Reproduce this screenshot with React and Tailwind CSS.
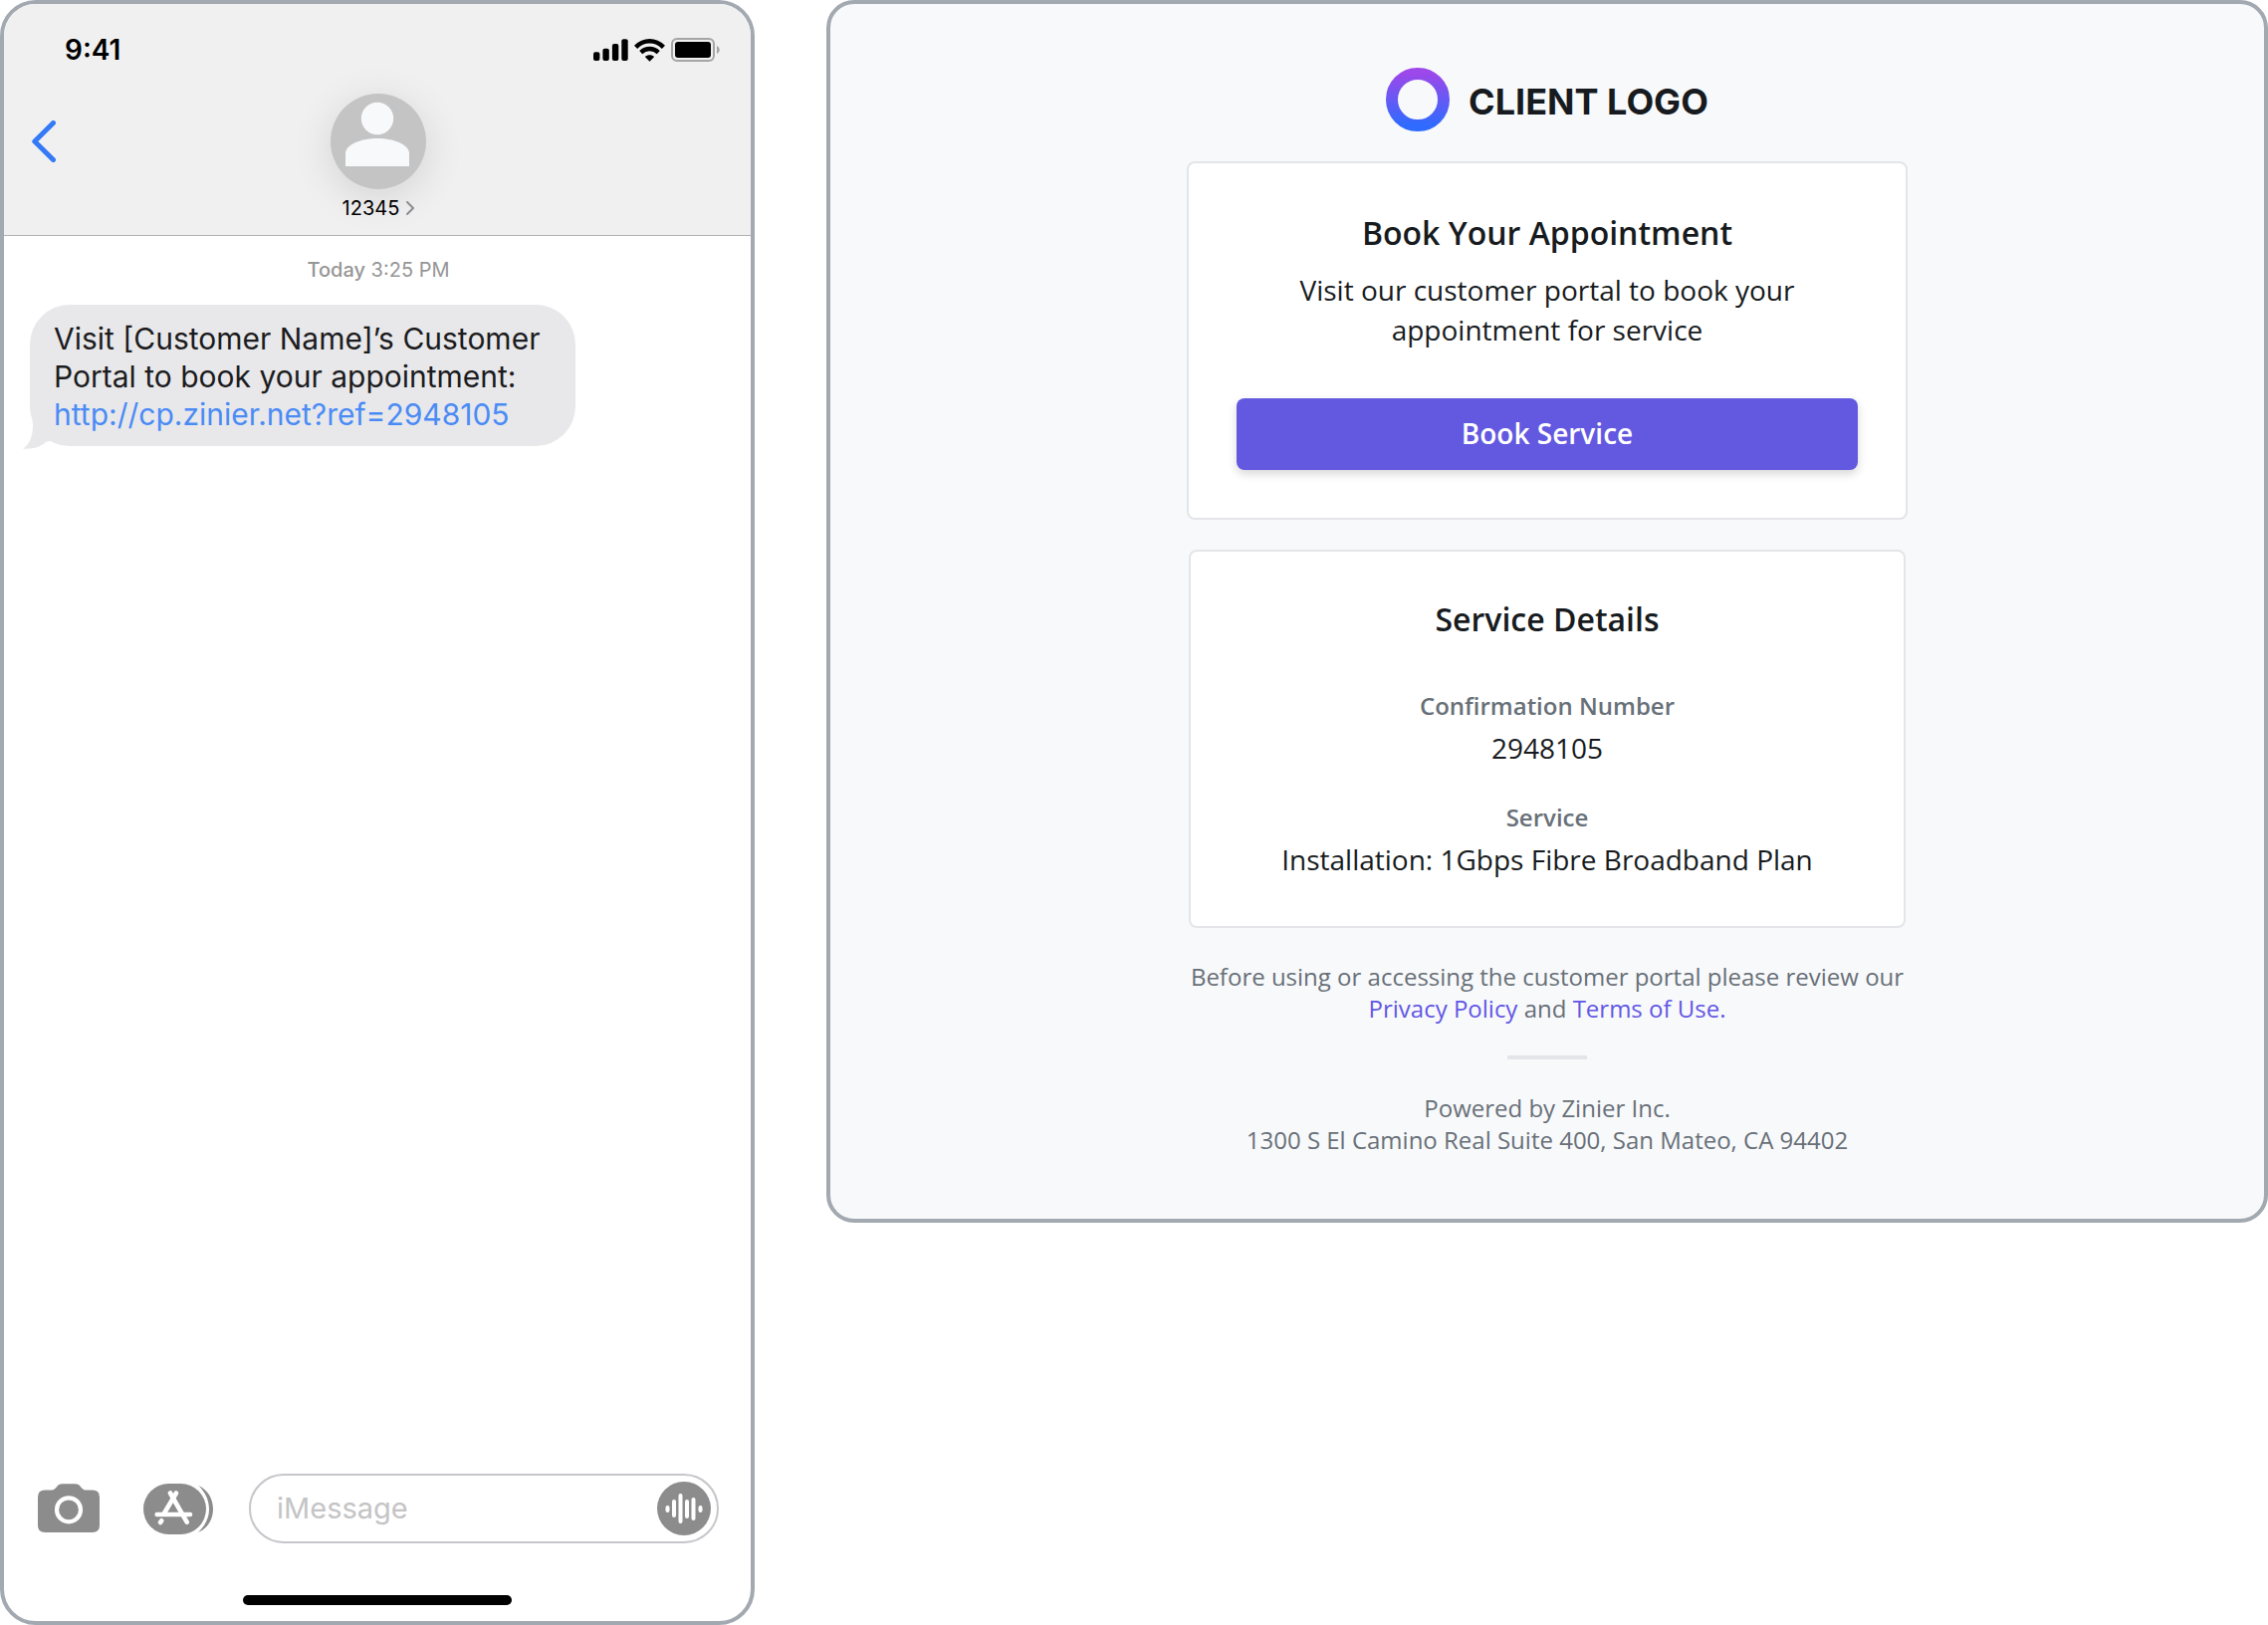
import React, { useState } from 'react';

const serviceDetails = [
  { label: 'Confirmation Number', value: '2948105' },
  { label: 'Service', value: 'Installation: 1Gbps Fibre Broadband Plan' },
];

// Status bar icons

const SignalIcon = () => (
  <svg className="w-[35px] h-[22px]" viewBox="0 0 35 22" aria-hidden="true">
    <rect x="0" y="13.2" width="6.4" height="8.8" rx="2" />
    <rect x="9.4" y="9.8" width="6.4" height="12.2" rx="2" />
    <rect x="18.9" y="5" width="6.4" height="17" rx="2" />
    <rect x="28.3" y="0.2" width="6.4" height="21.8" rx="2" />
  </svg>
);

const WifiIcon = () => (
  <svg className="w-[31px] h-[23px]" viewBox="0 0 31 23" fill="none" stroke="#000" strokeWidth="4.4" aria-hidden="true">
    <path d="M1.6 8.4C9.6 0.2 21.4 0.2 29.4 8.4" />
    <path d="M6.7 13.6C11.9 8.8 19.1 8.8 24.3 13.6" />
    <path d="M10.8 18C13.4 15.6 17.6 15.6 20.2 18L15.5 22.8Z" fill="#000" stroke="none" />
  </svg>
);

const BatteryIcon = () => (
  <svg className="w-[49px] h-[24px]" viewBox="0 0 49 24" aria-hidden="true">
    <rect x="1" y="1" width="42" height="22" rx="5" fill="none" stroke="#a5a5a5" strokeWidth="2" />
    <rect x="4" y="4" width="36" height="16" rx="3" />
    <path d="M46 8C49.6 9.6 49.6 14.4 46 16Z" fill="#a5a5a5" />
  </svg>
);

const BackIcon = () => (
  <svg className="w-6 h-[42px]" viewBox="0 0 24 42" fill="none" stroke="#3479f6" strokeWidth="5" strokeLinecap="round" strokeLinejoin="round" aria-hidden="true">
    <path d="M21.5 2.5L2.8 21L21.5 39.5" />
  </svg>
);

const PersonIcon = () => (
  <svg className="size-24" viewBox="0 0 96 96" fill="#f8f9fb" aria-hidden="true">
    <circle cx="47" cy="25" r="16.2" />
    <path d="M15 73V60C15 52 29 45 47 45S79 52 79 60V73Z" />
  </svg>
);

// Compose bar icons

const CameraIcon = () => (
  <svg className="w-[62px] h-[50px]" viewBox="0 0 62 50" aria-hidden="true">
    <path
      d="M7 6.5H14C16 6.5 17.5 5 19 3.2C20.5 1.2 22 0.3 24.5 0.3H37.5C40 0.3 41.5 1.2 43 3.2C44.5 5 46 6.5 48 6.5H55Q62 6.5 62 13.5V42Q62 49 55 49H7Q0 49 0 42V13.5Q0 6.5 7 6.5Z"
      fill="#8c8c8c"
    />
    <circle cx="31" cy="26.3" r="12" fill="none" stroke="#fff" strokeWidth="4.2" />
  </svg>
);

const AppsIcon = () => (
  <svg className="w-[70px] h-[51px]" viewBox="0 0 70 51" aria-hidden="true">
    <rect width="63" height="51" rx="25.5" fill="#8c8c8c" />
    <path d="M55.5 2C64.5 6 70 15 70 25.5S64.5 45 55 49C62 42.5 66 34.5 66 25.5S62 8.5 55.5 2Z" fill="#8c8c8c" />
    <g fill="none" stroke="#fff" strokeWidth="4.6" strokeLinecap="round">
      <path d="M33 9.5L20.5 30.5" />
      <path d="M27 9.5L43.7 38.7" />
      <path d="M13.7 31H47" />
      <path d="M18.3 37.3L17 39" />
    </g>
  </svg>
);

const AudioIcon = () => (
  <svg className="size-[54px]" viewBox="0 0 54 54" fill="none" stroke="#fff" strokeWidth="4" strokeLinecap="round" aria-hidden="true">
    <circle cx="27" cy="27" r="27" fill="#8c8c8c" stroke="none" />
    <path d="M10.5 26V29M17 20V34M23.5 14V40M30 20V35M36.5 18V37M43.5 26V29" />
  </svg>
);

const LogoMark = () => (
  <svg className="size-16" viewBox="0 0 64 64" aria-hidden="true">
    <defs>
      <linearGradient id="logoGradient" x1="0" y1="0" x2="0" y2="1">
        <stop offset="0" stopColor="#9c48ea" />
        <stop offset="1" stopColor="#2f6bff" />
      </linearGradient>
    </defs>
    <circle cx="32" cy="32" r="26" fill="none" stroke="url(#logoGradient)" strokeWidth="12" />
  </svg>
);

function PhoneHeader() {
  return (
    <header className="bg-[#f0f0f0] border-b border-[#b2b2b2] pt-6 pb-[15px]">
      <div className="flex items-center justify-between h-11 pl-[61px] pr-[31px]">
        <span className="text-[28px] leading-8 font-semibold">9:41</span>
        <div className="flex items-center gap-1.5">
          <SignalIcon />
          <WifiIcon />
          <BatteryIcon />
        </div>
      </div>
      <div className="grid grid-cols-[1fr_auto_1fr] mt-[22px] pl-7 pr-[26px]">
        <button type="button" aria-label="Back" className="flex items-center h-24 justify-self-start">
          <BackIcon />
        </button>
        <div className="flex flex-col items-center">
          <div className="rounded-full bg-[#c4c4c4] shadow-[0_8px_40px_rgba(0,0,0,0.12)]">
            <PersonIcon />
          </div>
          <button type="button" className="flex items-center gap-[7px] mt-[7px] text-[20px] leading-6">
            12345
            <svg className="w-2 h-[14px]" viewBox="0 0 8 14" fill="none" stroke="#8e8e93" strokeWidth="2" strokeLinecap="round" aria-hidden="true">
              <path d="M1 1L7 7L1 13" />
            </svg>
          </button>
        </div>
      </div>
    </header>
  );
}

function MessageBubble() {
  return (
    <div className="relative w-[548px] max-w-full mt-[23px] ml-[26px] px-6 pt-[15px] pb-[13px] rounded-[40px] bg-[#e8e8ea] text-[#1c1c1e] text-[30px] leading-[38px]">
      {/* tail */}
      <svg className="absolute -left-[7px] bottom-[-3px] w-[42px] h-[42px]" viewBox="0 0 42 42" fill="#e8e8ea" aria-hidden="true">
        <path d="M7 0C7 4 10 10 10 18C10 30 6 38 0 41.5C9 42.5 18 40 23 35L42 30V0Z" />
      </svg>
      <p className="relative">
        Visit [Customer Name]’s Customer Portal to book your appointment:
        <a href="http://cp.zinier.net?ref=2948105" className="block text-[#4b8bf5]">
          http://cp.zinier.net?ref=2948105
        </a>
      </p>
    </div>
  );
}

function ComposeBar() {
  const [message, setMessage] = useState('');

  return (
    <form className="flex items-center pl-[34px] pr-8" onSubmit={(e) => e.preventDefault()}>
      <button type="button" aria-label="Camera"><CameraIcon /></button>
      <button type="button" aria-label="Apps" className="ml-11"><AppsIcon /></button>
      <div className="flex flex-1 min-w-0 items-center h-[70px] ml-9 pl-[26px] pr-1.5 border-2 border-[#c6c6cb] rounded-full">
        <input
          type="text"
          aria-label="iMessage"
          placeholder="iMessage"
          value={message}
          onChange={(e) => setMessage(e.target.value)}
          className="flex-1 min-w-0 text-[29px] leading-[38px] outline-none placeholder:text-[#c4c4c6]"
        />
        <button type="button" aria-label="Record audio"><AudioIcon /></button>
      </div>
    </form>
  );
}

function PhonePreview() {
  return (
    <section className="flex flex-col min-h-screen overflow-hidden bg-white text-black border-4 border-[#a3a9b0] rounded-[36px] font-[Inter,sans-serif]">
      <PhoneHeader />
      <p className="mt-[22px] pl-0.5 text-center text-[20px] leading-6 text-[#969696]">
        <span className="font-medium">Today</span> 3:25 PM
      </p>
      <MessageBubble />
      <div className="mt-auto pb-4">
        <ComposeBar />
        <div className="w-[270px] h-2.5 mt-[52px] mx-auto rounded-full bg-black" />
      </div>
    </section>
  );
}

function Card({ title, className, children }) {
  return (
    <div className={`w-full bg-white border-2 border-[#e3e5e8] rounded-lg text-center ${className}`}>
      <h2 className="text-[32px] leading-[44px] font-semibold">{title}</h2>
      {children}
    </div>
  );
}

function EmailPreview() {
  return (
    <section className="flex flex-col items-center pt-16 pb-[63px] px-4 bg-[#f8f9fb] text-[#171b20] border-4 border-[#a3a9b0] rounded-[28px] font-['Open_Sans',sans-serif]">
      <div className="flex items-center gap-[19px]">
        <LogoMark />
        <span className="text-[36px] leading-[44px] pt-1 font-bold font-[Inter,sans-serif]">CLIENT LOGO</span>
      </div>

      <div className="flex flex-col items-center w-full max-w-[724px] mt-[30px] gap-[30px]">
        <Card title="Book Your Appointment" className="p-12">
          <p className="mt-[15px] text-[28px] leading-10">
            Visit our customer portal to book your<br />appointment for service
          </p>
          <button
            type="button"
            className="w-full h-[72px] mt-[49px] pb-0.5 rounded-lg bg-[#6358e0] text-white text-[28px] leading-10 font-semibold shadow-[0_4px_10px_rgba(0,0,0,0.16)]"
          >
            Book Service
          </button>
        </Card>

        <Card title="Service Details" className="max-w-[720px] px-6 pt-[46px] pb-[47px]">
          <dl className="flex flex-col gap-[34px] mt-[49px]">
            {serviceDetails.map(({ label, value }) => (
              <div key={label} className="flex flex-col gap-1.5">
                <dt className="text-[24px] leading-8 font-semibold text-[#687078]">{label}</dt>
                <dd className="text-[28px] leading-10">{value}</dd>
              </div>
            ))}
          </dl>
        </Card>
      </div>

      <footer className="flex flex-col items-center mt-[33px] text-center text-[24px] leading-8 text-[#687078]">
        <p>
          Before using or accessing the customer portal please review our<br />
          <a href="#privacy" className="text-[#6257e4]">Privacy Policy</a> and{' '}
          <a href="#terms" className="text-[#6257e4]">Terms of Use.</a>
        </p>
        <hr className="w-20 h-1 mt-[31px] mb-[33px] border-0 bg-[#e3e5e8]" />
        <address className="not-italic">
          Powered by Zinier Inc.<br />
          1300 S El Camino Real Suite 400, San Mateo, CA 94402
        </address>
      </footer>
    </section>
  );
}

export default function App() {
  return (
    <main className="grid grid-cols-[758fr_1448fr] gap-[72px] items-start min-h-screen bg-white">
      <PhonePreview />
      <EmailPreview />
    </main>
  );
}
